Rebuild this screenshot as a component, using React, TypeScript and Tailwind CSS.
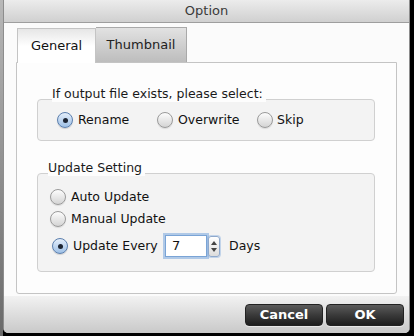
import React from "react";

const font = { fontFamily: '"DejaVu Sans", "Liberation Sans", sans-serif' };

function Radio({ checked }: { checked?: boolean }) {
  return checked ? (
    <span className="w-[16px] h-[16px] rounded-full border border-[#5b7fae] bg-gradient-to-b from-[#e4eefa] to-[#9ec0e6] flex items-center justify-center shrink-0 shadow-[0_1px_1px_rgba(0,0,0,0.15)]">
      <span className="w-[5px] h-[5px] rounded-full bg-[#1d2533]" />
    </span>
  ) : (
    <span className="w-[16px] h-[16px] rounded-full border border-[#9a9a9a] bg-gradient-to-b from-[#fdfdfd] to-[#d4d4d4] shrink-0 shadow-[0_1px_1px_rgba(0,0,0,0.1)]" />
  );
}

export default function App() {
  return (
    <div className="w-[414px] h-[336px] bg-black flex text-[#111]" style={font}>
      <div className="w-[3px] h-full bg-gradient-to-b from-[#b8b8b8] to-[#6a6a6a]" />
      <div className="w-[407px] h-[333px] flex flex-col bg-[#fbfbfb] border-x border-[#8d8d8d] rounded-b-[5px] overflow-hidden">
        {/* title bar */}
        <div className="h-[23px] shrink-0 bg-gradient-to-b from-[#ececec] to-[#d0d0d0] border-b border-[#9e9e9e] flex items-center justify-center text-[13px] text-[#3a3a3a]">
          Option
        </div>
        {/* body */}
        <div className="flex-1 flex flex-col px-[12px] pt-[4px] text-[12.5px]">
          <div className="flex h-[35px] items-end pl-[1px] text-[13px]">
            <div className="w-[79px] h-[35px] bg-gradient-to-b from-[#e6e6e6] via-white to-white border-x border-t border-[#c4c4c4] flex items-center justify-center -mb-px relative z-10">
              General
            </div>
            <div className="w-[91px] h-[35px] bg-gradient-to-b from-[#e2e2e2] to-[#bdbdbd] border-r border-t border-[#a9a9a9] flex items-center justify-center text-[#222]">
              Thumbnail
            </div>
          </div>
          <div className="h-[232px] border border-[#c4c4c4] rounded-b-[3px] bg-[#fdfdfd] flex flex-col pl-[20px] pr-[21px]">
            {/* group 1 */}
            <div className="mt-[36px] h-[42px] rounded-[4px] border border-[#d0d0d0] bg-[#f3f3f3] relative flex items-center pl-[19px]">
              <span className="absolute left-[14px] -top-[14px] bg-[#fdfdfd] pr-[3px] leading-[16px] text-[#1a1a1a]">
                If output file exists, please select:
              </span>
              <div className="flex items-center gap-[5px] w-[100px]">
                <Radio checked />
                <span>Rename</span>
              </div>
              <div className="flex items-center gap-[5px] w-[100px]">
                <Radio />
                <span>Overwrite</span>
              </div>
              <div className="flex items-center gap-[4px]">
                <Radio />
                <span>Skip</span>
              </div>
            </div>
            {/* group 2 */}
            <div className="mt-[32px] h-[99px] rounded-[4px] border border-[#d0d0d0] bg-[#f3f3f3] relative flex flex-col pl-[12px] pt-[13px]">
              <span className="absolute left-[10px] -top-[14px] bg-[#fdfdfd] pr-[3px] leading-[16px] text-[#1a1a1a]">
                Update Setting
              </span>
              <div className="flex items-center gap-[5px] h-[20px]">
                <Radio />
                <span>Auto Update</span>
              </div>
              <div className="flex items-center gap-[5px] h-[20px] mt-[2px]">
                <Radio />
                <span>Manual Update</span>
              </div>
              <div className="flex items-center h-[24px] mt-[5px] pl-[2px]">
                <Radio checked />
                <span className="ml-[5px] w-[92px]">Update Every</span>
                <div className="w-[42px] h-[22px] bg-white border border-[#7aa4d6] shadow-[0_0_0_2px_rgba(120,165,220,0.55)] flex items-center pl-[6px] text-[13px]">
                  7
                </div>
                <div className="w-[12px] h-[21px] ml-[1px] rounded-[3px] border border-[#8fa9cc] bg-gradient-to-b from-white to-[#dcdcdc] flex flex-col items-center justify-center gap-[3px] shadow-[0_0_0_1px_rgba(120,165,220,0.4)]">
                  <span className="w-0 h-0 border-x-[3px] border-x-transparent border-b-[4px] border-b-[#444]" />
                  <span className="w-0 h-0 border-x-[3px] border-x-transparent border-t-[4px] border-t-[#444]" />
                </div>
                <span className="ml-[9px]">Days</span>
              </div>
            </div>
          </div>
        </div>
        {/* bottom bar */}
        <div className="h-[37px] shrink-0 bg-gradient-to-b from-[#f2f2f2] to-[#c9c9c9] flex items-center justify-end pr-[5px] gap-[3px] pt-[1px]">
          <button className="w-[78px] h-[22px] rounded-[4px] bg-gradient-to-b from-[#5c5c5c] via-[#3a3a3a] to-[#1e1e1e] border border-[#222] text-white text-[13px] font-semibold flex items-center justify-center shadow-[0_1px_0_rgba(255,255,255,0.5)]">
            Cancel
          </button>
          <button className="w-[78px] h-[22px] rounded-[4px] bg-gradient-to-b from-[#5c5c5c] via-[#3a3a3a] to-[#1e1e1e] border border-[#222] text-white text-[13px] font-semibold flex items-center justify-center shadow-[0_1px_0_rgba(255,255,255,0.5)]">
            OK
          </button>
        </div>
      </div>
    </div>
  );
}
